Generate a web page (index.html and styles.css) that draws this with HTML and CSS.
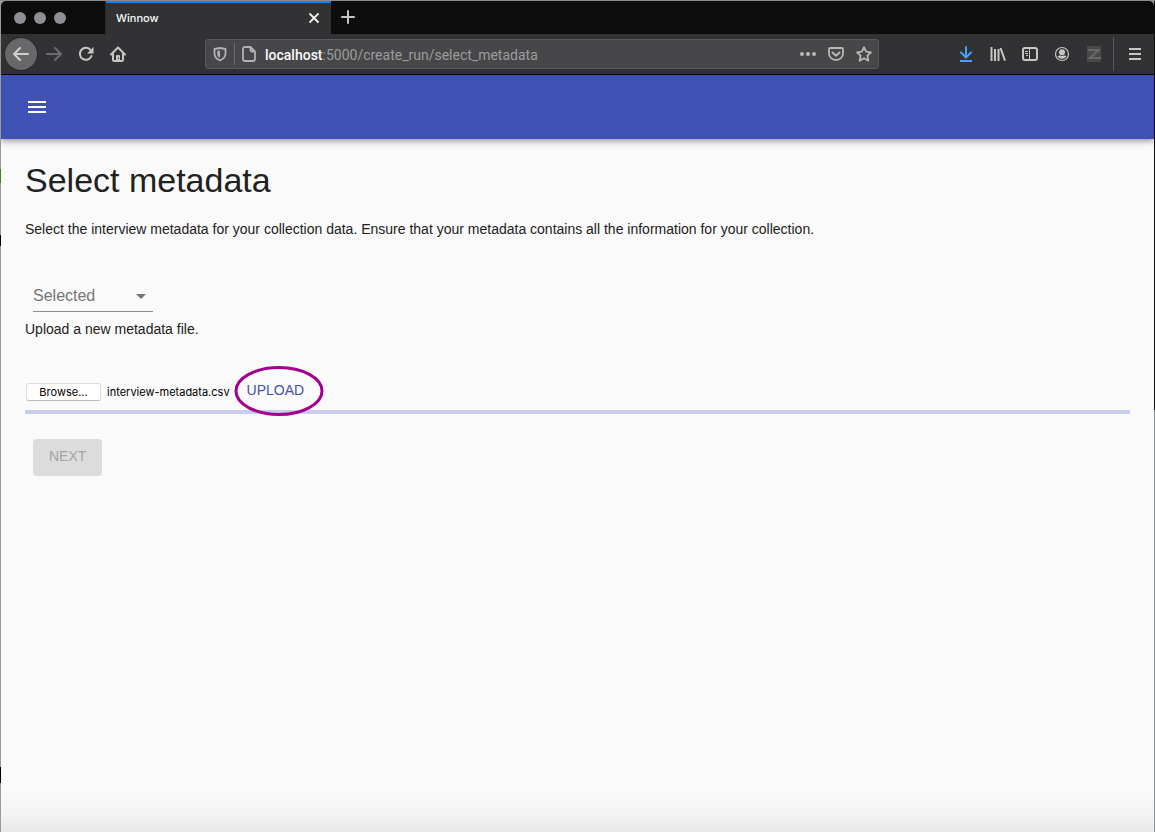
FILE: index.html
```html
<!DOCTYPE html>
<html lang="en">
<head>
<meta charset="utf-8">
<title>Winnow</title>
<link rel="stylesheet" href="styles.css">
</head>
<body>
<div class="window">
  <header class="chrome">
    <div class="tabstrip">
      <div class="lights"><span class="light"></span><span class="light"></span><span class="light"></span></div>
      <div class="tab">
        <span class="tab-title">Winnow</span>
        <button class="icon-btn tab-close" aria-label="Close tab"><svg width="12" height="12" viewBox="0 0 12 12"><path d="M1.500 1.500l9 9M10.500 1.500l-9 9" stroke="#f2f2f3" stroke-width="1.800" fill="none"/></svg></button>
      </div>
      <button class="icon-btn new-tab" aria-label="New tab"><svg width="16" height="16" viewBox="0 0 16 16"><path d="M8 2v12M2 8h12" stroke="#c4c4c6" stroke-width="2" stroke-linecap="round"/></svg></button>
    </div>
    <div class="toolbar">
      <div class="tools">
        <button class="icon-btn back" aria-label="Back"><svg width="18" height="18" viewBox="0 0 18 18"><path d="M16 9H2M8 3L2 9l6 6" fill="none" stroke="#d0d0d1" stroke-width="2" stroke-linecap="round" stroke-linejoin="round"/></svg></button>
        <button class="icon-btn" aria-label="Forward" disabled><svg width="16" height="16" viewBox="0 0 16 16"><path d="M1 8h14M9 2l6 6-6 6" fill="none" stroke="#6c6c6e" stroke-width="2" stroke-linecap="round" stroke-linejoin="round"/></svg></button>
        <button class="icon-btn" aria-label="Reload"><svg width="16" height="16" viewBox="0 0 16 16"><path d="M12.700 4.200A6 6 0 1 0 13.500 10" fill="none" stroke="#c6c6c7" stroke-width="2" stroke-linecap="round"/><path d="M15.500 1v6.500H9z" fill="#c6c6c7"/></svg></button>
        <button class="icon-btn" aria-label="Home"><svg width="16" height="16" viewBox="0 0 16 16"><path d="M1 8.500L8 1.500l7 7M3 8v5.500q0 1.500 1.500 1.500h7q1.500 0 1.500-1.500V8" fill="none" stroke="#c6c6c7" stroke-width="2" stroke-linecap="round" stroke-linejoin="round"/><path d="M6 15v-5q0-1 1-1h2q1 0 1 1v5z" fill="#c6c6c7"/><path d="M8.500 11.500v1.500" stroke="#323234" stroke-width="1"/></svg></button>
      </div>
      <div class="urlbar">
        <button class="icon-btn small shield" aria-label="Site protections"><svg width="14" height="16" viewBox="0 0 14 16"><path d="M7 2L12.500 3v4.500c0 3.200-2 5.500-5.500 7C3.500 13 1.500 10.700 1.500 7.500V3z" fill="none" stroke="#b2b2b4" stroke-width="1.800" stroke-linejoin="round"/><path d="M7 4.500v7.200C5 10.700 4.200 9.500 4.200 7.500V5z" fill="#b2b2b4"/></svg></button>
        <span class="url-sep"></span>
        <button class="icon-btn small" aria-label="Site information"><svg width="16" height="18" viewBox="0 0 16 18"><path d="M9.500 2H4Q2 2 2 4v10q0 2 2 2h8q2 0 2-2V6.500zM9.500 2v3q0 1.500 1.500 1.500h3" fill="none" stroke="#b2b2b4" stroke-width="1.800" stroke-linejoin="round"/></svg></button>
        <div class="url" role="textbox" aria-label="Address"><span class="host">localhost</span>:5000/create_run/select_metadata</div>
        <div class="url-actions">
          <button class="icon-btn small" aria-label="Page actions"><svg width="16" height="16" viewBox="0 0 16 16" fill="#b8b8b9"><circle cx="2" cy="8" r="2"/><circle cx="8" cy="8" r="2"/><circle cx="14" cy="8" r="2"/></svg></button>
          <button class="icon-btn small" aria-label="Save to Pocket"><svg width="16" height="16" viewBox="0 0 16 16" fill="none" stroke="#b8b8b9" stroke-linecap="round" stroke-linejoin="round"><path d="M2.200 2h11.600q1.200 0 1.200 1.200V7.500a7 6.500 0 0 1-14 0V3.200Q1 2 2.200 2z" stroke-width="1.800"/><path d="M4.500 6.500L8 9.800l3.500-3.300" stroke-width="2"/></svg></button>
          <button class="icon-btn small" aria-label="Bookmark"><svg width="16" height="16" viewBox="0 0 16 16"><path d="M8 1.200l2.100 4.500 4.900.6-3.600 3.400.9 5L8 12.300l-4.300 2.400.9-5L1 6.300l4.900-.6z" fill="none" stroke="#b8b8b9" stroke-width="1.800" stroke-linejoin="round"/></svg></button>
        </div>
      </div>
      <div class="tools">
        <button class="icon-btn" aria-label="Downloads"><svg width="16" height="16" viewBox="0 0 16 16"><path d="M8 1v10M3 6.500l5 5 5-5" fill="none" stroke="#45a1ff" stroke-width="2" stroke-linecap="round" stroke-linejoin="round"/><path d="M2 15h12" stroke="#45a1ff" stroke-width="2"/></svg></button>
        <button class="icon-btn" aria-label="Library"><svg width="16" height="16" viewBox="0 0 16 16"><path d="M1.500 1v14M5 3v12M8.500 3v12M10.500 2l4.500 12.700" fill="none" stroke="#c6c6c7" stroke-width="2"/></svg></button>
        <button class="icon-btn" aria-label="Sidebars"><svg width="16" height="16" viewBox="0 0 16 16" fill="none" stroke="#c6c6c7"><rect x="1" y="2" width="14" height="12" rx="2" stroke-width="2"/><path d="M7.500 2v12" stroke-width="1"/><path d="M3 5.500h3M3 7.500h3M4 9.500h2" stroke-width="1"/></svg></button>
        <button class="icon-btn" aria-label="Account"><svg width="16" height="16" viewBox="0 0 16 16"><circle cx="8" cy="8" r="6.500" fill="none" stroke="#c6c6c7" stroke-width="1.200"/><circle cx="8" cy="6.200" r="3" fill="#c6c6c7"/><path d="M3.500 10.200q1.500-1 2.800-.6Q8 10.500 9.700 9.600q1.300-.4 2.800.6Q11 13 8 13t-4.500-2.800z" fill="#c6c6c7"/></svg></button>
        <button class="icon-btn" aria-label="Zotero" disabled><svg width="16" height="16" viewBox="0 0 16 16"><path d="M1 0h14v16H1z" fill="#49494a"/><path d="M2 4h10.500L4 12h11" fill="none" stroke="#69696a" stroke-width="2.200"/></svg></button>
      </div>
      <button class="icon-btn menu" aria-label="Open menu"><svg width="14" height="14" viewBox="0 0 14 14"><path d="M1 2h12M1 7h12M1 12h12" stroke="#c6c6c7" stroke-width="2"/></svg></button>
    </div>
  </header>
  <div class="page">
    <div class="appbar">
      <button class="icon-btn" aria-label="Open navigation"><svg width="24" height="24" viewBox="0 0 24 24"><path d="M3 18h18v-2H3v2zm0-5h18v-2H3v2zm0-7v2h18V6H3z" fill="#fff"/></svg></button>
    </div>
    <main class="content">
      <h1 class="title">Select metadata</h1>
      <p class="text">Select the interview metadata for your collection data. Ensure that your metadata contains all the information for your collection.</p>
      <div class="select-wrap">
        <select class="select" aria-label="Selected"><option>Selected</option></select>
        <svg class="caret" width="24" height="24" viewBox="0 0 24 24"><path d="M7 10l5 5 5-5z" fill="#757575"/></svg>
      </div>
      <p class="text">Upload a new metadata file.</p>
      <form class="upload-row">
        <button type="button" class="browse" aria-describedby="file-name">Browse...</button>
        <output class="file-name" id="file-name">interview-metadata.csv</output>
        <span class="upload-wrap">
          <button type="button" class="upload">UPLOAD</button>
          <svg class="ring" width="94" height="56" viewBox="0 0 94 56"><ellipse cx="47" cy="28" rx="43" ry="23.500" fill="none" stroke="#a3008f" stroke-width="3"/></svg>
        </span>
      </form>
      <div class="progress" role="progressbar" aria-label="Upload progress"></div>
      <button class="next" disabled>NEXT</button>
    </main>
  </div>
</div>
</body>
</html>
```
FILE: styles.css
```css
* { box-sizing: border-box; }

body {
  margin: 0;
  min-height: 100vh;
  padding: 1px 1px 0;
  display: flex;
  background:
    linear-gradient(#8b8b8d, #8b8b8d) top / 100% 1px no-repeat,
    linear-gradient(#000, #000) 0 767px / 1px 16px no-repeat,
    linear-gradient(#2f8a17, #2f8a17) 0 169px / 1px 14px no-repeat,
    linear-gradient(#000, #000) 0 235px / 1px 11px no-repeat,
    linear-gradient(#0c0c0d 410px, #8a9094 410px) right / 1px 100% no-repeat,
    #9a9a9a;
  font-family: "Liberation Sans", Arial, sans-serif;
  color: #212121;
}

.window {
  flex: 1;
  display: flex;
  flex-direction: column;
  border-radius: 5px 5px 0 0;
  overflow: hidden;
}

.icon-btn {
  display: flex;
  align-items: center;
  justify-content: center;
  flex: none;
  width: 32px;
  height: 32px;
  padding: 0;
  border: 0;
  background: none;
}

.icon-btn.small { width: 28px; }

.tabstrip {
  display: flex;
  height: 33px;
  background: #0c0c0d;
}

.lights {
  display: flex;
  align-items: center;
  gap: 8px;
  width: 105px;
  padding-left: 13px;
  border-right: 1px solid #29292b;
}

.light {
  width: 12px;
  height: 12px;
  border-radius: 50%;
  background: #8f8e95;
}

.tab {
  display: flex;
  align-items: center;
  justify-content: space-between;
  width: 225px;
  padding: 0 1px 2px 10px;
  border-top: 2px solid #0a84ff;
  background: #323234;
  font: 500 11px/16px Inter, sans-serif;
  color: #f9f9fa;
}

.new-tab { margin-left: 1px; }

.toolbar {
  display: flex;
  align-items: center;
  height: 41px;
  padding-left: 4px;
  border-bottom: 1px solid #0c0c0d;
  background: #323234;
}

.tools { display: flex; }

.back {
  margin-right: 1px;
  border-radius: 50%;
  background: #68686a;
  box-shadow: 0 0 0 1px #29292b;
}

.urlbar {
  flex: 1;
  display: flex;
  align-items: center;
  height: 30px;
  min-width: 0;
  margin: 0 71px;
  border: 1px solid #59595b;
  border-radius: 3px;
  background: #474749;
}

.url-sep {
  width: 1px;
  height: 22px;
  background: #65707c;
}

.url {
  flex: 1;
  min-width: 0;
  padding: 2px 0 0 2px;
  overflow: hidden;
  white-space: nowrap;
  font: 14px/20px Roboto, sans-serif;
  color: #9c9c9e;
}

.host {
  font-weight: 500;
  color: #f9f9fa;
}

.url-actions { display: flex; }

.menu {
  width: 41px;
  height: 34px;
  margin-left: 3px;
  padding-left: 2px;
  border-left: 1px solid #59595b;
}

.page {
  flex: 1;
  background: linear-gradient(transparent calc(100% - 44px), #f3f3f3 calc(100% - 16px), #e7e7e7) #fafafa;
}

.appbar {
  display: flex;
  align-items: center;
  height: 64px;
  padding: 0 20px;
  background: #3f51b5;
  box-shadow: 0 2px 4px -1px rgba(0, 0, 0, .2), 0 4px 5px rgba(0, 0, 0, .14), 0 1px 10px rgba(0, 0, 0, .12);
}

.content { padding: 20px 24px 24px; }

.title {
  margin: 0 0 18px;
  font-size: 34px;
  font-weight: 400;
  line-height: 42px;
}

.text {
  margin: 0;
  font-size: 14px;
  line-height: 20px;
}

.select-wrap {
  position: relative;
  width: 120px;
  margin: 41px 8px 7px;
}

.select {
  display: block;
  width: 100%;
  height: 32px;
  padding: 0 24px 0 0;
  border: 0;
  border-bottom: 1px solid #8e8e8e;
  border-radius: 0;
  appearance: none;
  background: none;
  font: 16px/20px "Liberation Sans", Arial, sans-serif;
  color: #757575;
}

.caret {
  position: absolute;
  top: 4px;
  right: 0;
  pointer-events: none;
}

.upload-row {
  display: flex;
  align-items: center;
  height: 36px;
  margin: 34px 0 1px;
}

.browse {
  width: 75px;
  height: 18px;
  margin: 2px 6px 0 1px;
  padding: 0;
  border: 1px solid #dcdcdc;
  border-bottom-color: #bcbcbc;
  border-radius: 3px;
  background: #fff;
  font: 11px/14px Inter, sans-serif;
  color: #000;
}

.file-name {
  margin-top: 2px;
  font: 11px/14px Inter, sans-serif;
  color: #000;
}

.upload-wrap {
  position: relative;
  margin-left: 9px;
}

.upload {
  display: block;
  height: 36px;
  padding: 0 8px 2px;
  border: 0;
  background: none;
  font: 14px/24px "Liberation Sans", Arial, sans-serif;
  color: #3f51b5;
}

.ring {
  position: absolute;
  top: -10px;
  left: -7px;
  pointer-events: none;
}

.progress {
  height: 4px;
  background: #c8cdeb;
}

.next {
  display: block;
  height: 37px;
  margin: 25px 8px 0;
  padding: 0 16px 3px;
  border: 0;
  border-radius: 4px;
  background: #dcdcdc;
  font: 14px/24px "Liberation Sans", Arial, sans-serif;
  color: #a5a5a5;
}
```
